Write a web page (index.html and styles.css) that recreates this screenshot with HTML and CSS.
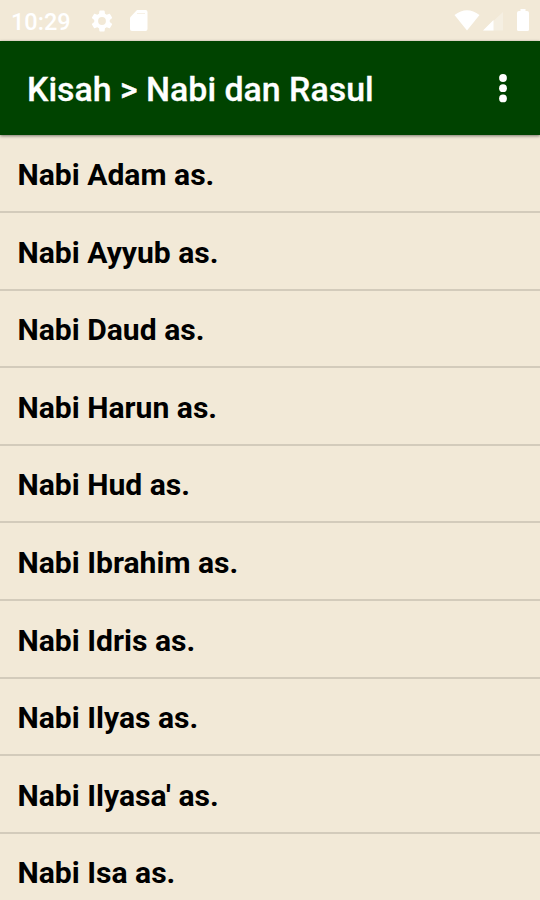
FILE: index.html
```html
<!DOCTYPE html>
<html lang="id">
<head>
<meta charset="utf-8">
<title>Kisah</title>
<link rel="stylesheet" href="styles.css">
</head>
<body>
<div class="status">
  <span class="time">10:29</span>
  <svg class="gear" width="26" height="26" viewBox="0 0 24 24"><path fill="#fff" d="M19.14 12.94c.04-.3.06-.61.06-.94s-.02-.64-.07-.94l2.03-1.58a.49.49 0 0 0 .12-.61l-1.92-3.32a.49.49 0 0 0-.59-.22l-2.39.96a7 7 0 0 0-1.62-.94l-.36-2.54a.48.48 0 0 0-.48-.41h-3.84a.47.47 0 0 0-.47.41l-.36 2.54c-.59.24-1.13.57-1.62.94l-2.39-.96a.48.48 0 0 0-.59.22L2.74 8.87a.47.47 0 0 0 .12.61l2.03 1.58a6 6 0 0 0-.02 1.88l-2.03 1.58a.49.49 0 0 0-.12.61l1.92 3.32c.12.22.37.29.59.22l2.39-.96c.5.38 1.03.7 1.62.94l.36 2.54c.05.24.24.41.48.41h3.84c.24 0 .44-.17.47-.41l.36-2.54c.59-.24 1.13-.56 1.62-.94l2.39.96c.22.08.47 0 .59-.22l1.92-3.32a.47.47 0 0 0-.12-.61zM12 15.6a3.6 3.6 0 1 1 0-7.2 3.6 3.6 0 0 1 0 7.2z"/></svg>
  <svg class="card" width="20" height="24" viewBox="0 0 20 24"><path fill="#fff" d="M8 1h8.500a2 2 0 0 1 2 2v17a2 2 0 0 1-2 2h-13.500a2 2 0 0 1-2-2V8.500z"/><path d="M8 4.500h8" stroke="#f2e9d7" stroke-width="1" opacity=".6"/></svg>
  <span class="space"></span>
  <svg class="wifi" width="28" height="24" viewBox="0 0 28 24"><path fill="#fff" d="M14 21.500 1.500 6Q14-3.500 26.500 6z"/></svg>
  <svg class="signal" width="22" height="24" viewBox="0 0 22 24"><path fill="#fff" opacity=".28" d="M1 21.500 21 3v18.500z"/><path fill="#fff" d="M1 21.500 11.500 11v10.500z"/></svg>
  <svg class="battery" width="14" height="24" viewBox="0 0 14 24"><path fill="#fff" d="M4.500 0h5v2H11a2 2 0 0 1 2 2v16.500a1.500 1.500 0 0 1-1.500 1.500h-9A1.500 1.500 0 0 1 1 20.500V4a2 2 0 0 1 2-2h1.500z"/></svg>
</div>
<header class="bar">
  <h1>Kisah &gt; Nabi dan Rasul</h1>
  <svg width="10" height="30" viewBox="0 0 10 30"><g fill="#fff"><circle cx="5" cy="5" r="3.9"/><circle cx="5" cy="15.200" r="3.900"/><circle cx="5" cy="25.400" r="3.900"/></g></svg>
</header>
<ul class="list">
  <li>Nabi Adam as.</li>
  <li>Nabi Ayyub as.</li>
  <li>Nabi Daud as.</li>
  <li>Nabi Harun as.</li>
  <li>Nabi Hud as.</li>
  <li>Nabi Ibrahim as.</li>
  <li>Nabi Idris as.</li>
  <li>Nabi Ilyas as.</li>
  <li>Nabi Ilyasa' as.</li>
  <li>Nabi Isa as.</li>
</ul>
</body>
</html>
```
FILE: styles.css
```css
* { box-sizing: border-box; }
body { margin: 0; height: 900px; overflow: hidden; background: #f2e9d7; font-family: Roboto, sans-serif; }
.status { height: 41px; display: flex; align-items: center; padding: 1px 10px 0 11px; color: #fff; }
.time { width: 78px; padding-top: 2px; font-size: 23.5px; font-weight: 500; }
.card { margin-left: 14px; }
.space { flex: 1; }
.signal { margin: 0 12px 0 1px; }
.bar { height: 94px; background: #004300; color: #fff; display: flex; align-items: center; justify-content: space-between; padding: 0 32px 0 27px; box-shadow: 0 1px 3px rgba(0,0,0,.5); }
.bar h1 { margin: 0; padding-top: 2px; font-size: 33.9px; font-weight: 500; -webkit-text-stroke: .3px #fff; }
.list { margin: 0; padding: .4px 0 0; list-style: none; }
.list li { height: 77.6px; display: flex; align-items: center; padding: 2.6px 0 0 17.5px; font-size: 30.1px; font-weight: 700; color: #000; border-bottom: 2px solid #d3cbbb; }
```
